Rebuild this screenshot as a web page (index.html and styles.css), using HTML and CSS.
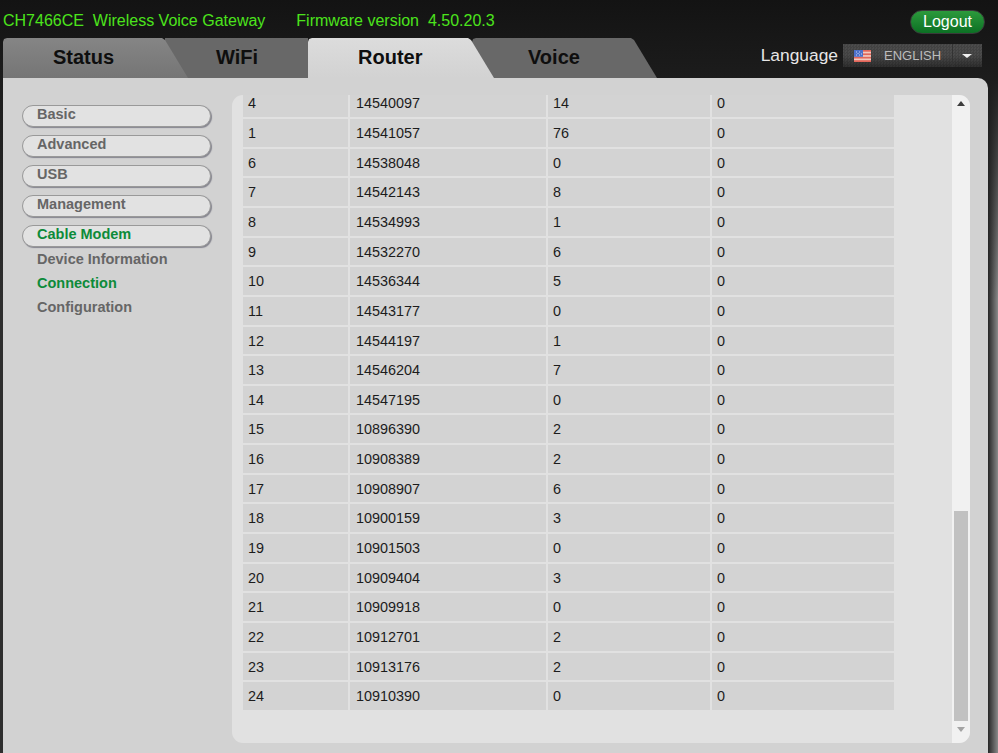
FILE: index.html
```html
<!DOCTYPE html>
<html lang="en">
<head>
<meta charset="utf-8">
<title>CH7466CE Wireless Voice Gateway</title>
<link rel="stylesheet" href="styles.css">
</head>
<body>
<div class="page">
  <header class="top">
    <div class="top-left">
      <div class="brand">
        <span>CH7466CE&nbsp; Wireless Voice Gateway</span>
        <span>Firmware version&nbsp; 4.50.20.3</span>
      </div>
      <nav class="tabs">
        <a class="tab tab-status">Status</a>
        <a class="tab tab-wifi">WiFi</a>
        <a class="tab tab-router">Router</a>
        <a class="tab tab-voice">Voice</a>
      </nav>
    </div>
    <div class="top-right">
      <button class="logout">Logout</button>
      <div class="lang">
        <span class="lang-label">Language</span>
        <div class="lang-select">
          <svg class="flag" width="17" height="12" viewBox="0 0 17 12">
            <rect width="17" height="12" fill="#f3c9bf"/>
            <rect y="0" width="17" height="1.7" fill="#e2665a"/>
            <rect y="3.4" width="17" height="1.7" fill="#e2665a"/>
            <rect y="6.8" width="17" height="1.7" fill="#e2665a"/>
            <rect y="10.2" width="17" height="1.8" fill="#e2665a"/>
            <rect width="9" height="6.8" fill="#4d70c9"/>
            <path d="M2 2h1M5 2h1M7 4h1M3.500 3.500h1M2 5h1M5 5h1" stroke="#c4d2f2" stroke-width="1"/>
          </svg>
          <span class="lang-name">ENGLISH</span>
          <span class="lang-caret"></span>
        </div>
      </div>
    </div>
  </header>

  <main class="panel">
    <aside class="side">
      <a class="pill">Basic</a>
      <a class="pill">Advanced</a>
      <a class="pill">USB</a>
      <a class="pill">Management</a>
      <a class="pill is-on">Cable Modem</a>
      <ul class="sub">
        <li>Device Information</li>
        <li class="is-on">Connection</li>
        <li>Configuration</li>
      </ul>
    </aside>

    <section class="box">
      <div class="viewport">
        <div class="grid">
          <div>4</div><div>14540097</div><div>14</div><div>0</div>
          <div>1</div><div>14541057</div><div>76</div><div>0</div>
          <div>6</div><div>14538048</div><div>0</div><div>0</div>
          <div>7</div><div>14542143</div><div>8</div><div>0</div>
          <div>8</div><div>14534993</div><div>1</div><div>0</div>
          <div>9</div><div>14532270</div><div>6</div><div>0</div>
          <div>10</div><div>14536344</div><div>5</div><div>0</div>
          <div>11</div><div>14543177</div><div>0</div><div>0</div>
          <div>12</div><div>14544197</div><div>1</div><div>0</div>
          <div>13</div><div>14546204</div><div>7</div><div>0</div>
          <div>14</div><div>14547195</div><div>0</div><div>0</div>
          <div>15</div><div>10896390</div><div>2</div><div>0</div>
          <div>16</div><div>10908389</div><div>2</div><div>0</div>
          <div>17</div><div>10908907</div><div>6</div><div>0</div>
          <div>18</div><div>10900159</div><div>3</div><div>0</div>
          <div>19</div><div>10901503</div><div>0</div><div>0</div>
          <div>20</div><div>10909404</div><div>3</div><div>0</div>
          <div>21</div><div>10909918</div><div>0</div><div>0</div>
          <div>22</div><div>10912701</div><div>2</div><div>0</div>
          <div>23</div><div>10913176</div><div>2</div><div>0</div>
          <div>24</div><div>10910390</div><div>0</div><div>0</div>
        </div>
      </div>
      <div class="scrollbar">
        <span class="arrow arrow-up"></span>
        <div class="track"><div class="thumb"></div></div>
        <span class="arrow arrow-down"></span>
      </div>
    </section>
  </main>
</div>
</body>
</html>
```

FILE: styles.css
```css
* { box-sizing: border-box; }
html, body { margin: 0; padding: 0; height: 100%; overflow: hidden; }
body {
  font-family: "Liberation Sans", Arial, sans-serif;
  background-color: #2e2e2e;
  background-image:
    linear-gradient(#1c1c1c 78px, rgba(28,28,28,0) 300px),
    linear-gradient(to right, #262626, #8a8a8a);
  background-repeat: no-repeat;
  background-size: 100% 100%, 10px 100%;
  background-position: 0 0, right 0 top 0;
}
.page { width: 998px; height: 753px; display: flex; flex-direction: column; }

.top {
  height: 78px;
  flex: none;
  display: flex;
  justify-content: space-between;
  background: linear-gradient(#131313, #1c1c1c);
}
.top-left { padding-left: 3px; display: flex; flex-direction: column; }
.brand {
  height: 38px;
  padding-top: 12px;
  display: flex;
  gap: 31px;
  font-size: 16px;
  line-height: 18px;
  color: #4ce41c;
}
.tabs { display: flex; height: 40px; }
.tab {
  display: block;
  height: 40px;
  padding: 8px 0 0 50px;
  font-size: 20px;
  line-height: 22px;
  font-weight: 700;
  color: #0e0e0e;
  clip-path: polygon(0 4px, 1px 1px, 4px 0, calc(100% - 26px) 0, calc(100% - 23px) 2px, 100% 100%, 0 100%);
}
.tab-status { width: 185px; background: linear-gradient(#858585, #757575); position: relative; z-index: 2; }
.tab-wifi { width: 143px; margin-left: -23px; padding-left: 51px; background: #686868; clip-path: none; }
.tab-router { width: 186px; background: linear-gradient(#dcdcdc, #d2d2d2); position: relative; z-index: 2; }
.tab-voice { width: 185px; margin-left: -22px; padding-left: 56px; background: #686868; }

.top-right {
  width: 155px;
  margin-right: 13px;
  padding-top: 10px;
  display: flex;
  flex-direction: column;
  align-items: flex-end;
  position: relative;
}
.logout {
  width: 75px;
  height: 24px;
  padding: 0;
  border: 1px solid #3a3a3a;
  border-radius: 12px;
  background: linear-gradient(#2c9a3c, #0c7024);
  color: #fff;
  font: 16px/20px "Liberation Sans", Arial, sans-serif;
}
.lang {
  position: absolute;
  right: 3px;
  top: 44px;
  display: flex;
  align-items: center;
  gap: 5px;
}
.lang-label { font-size: 17.4px; line-height: 20px; padding-bottom: 2px; color: #e6e6e6; }
.lang-select {
  width: 139px;
  height: 23px;
  display: flex;
  align-items: center;
  padding-left: 11px;
  background:
    repeating-conic-gradient(rgba(0,0,0,.12) 0 25%, transparent 0 50%) 0 0 / 3px 3px,
    linear-gradient(#4c4c4c, #4a4a4a 50%, #2e2e2e);
}
.flag { flex: none; }
.lang-name {
  width: 82px;
  height: 100%;
  padding-left: 13px;
  font-size: 13px;
  line-height: 23px;
  color: #bcbcbc;
  border-right: 1px solid #333;
}
.lang-caret {
  width: 0;
  height: 0;
  margin-left: 9px;
  border-left: 5px solid transparent;
  border-right: 5px solid transparent;
  border-top: 4px solid #f0f0f0;
}

.panel {
  flex: 1;
  width: 985px;
  margin-left: 3px;
  min-height: 0;
  display: flex;
  gap: 21px;
  padding: 17px 18px 10px 19px;
  background: #d2d2d2;
  border-top-right-radius: 10px;
}
.side { width: 189px; flex: none; padding-top: 10px; display: flex; flex-direction: column; }
.pill {
  display: block;
  flex: none;
  height: 22px;
  margin-bottom: 8px;
  padding-left: 14px;
  font-size: 14.5px;
  line-height: 16px;
  font-weight: 700;
  color: #666;
  background: #e2e2e2;
  border: 1px solid #999;
  border-radius: 11px;
  box-shadow: 1px 1px 1px #85858f;
}
.pill.is-on, .sub .is-on { color: #0d8b3a; }
.sub {
  list-style: none;
  margin: -8px 0 0;
  padding: 0 0 0 15px;
  font-size: 14.5px;
  line-height: 24px;
  font-weight: 700;
  color: #666;
}

.box {
  flex: 1;
  min-width: 0;
  display: flex;
  justify-content: space-between;
  background: #e1e1e1;
  border-radius: 11px;
  overflow: hidden;
}
.viewport { flex: none; width: 662px; padding-left: 11px; overflow: hidden; }
.grid {
  display: grid;
  grid-template-columns: 105px 196px 162px 182px;
  grid-auto-rows: 27.65px;
  gap: 2px;
  margin-top: -5.6px;
  font-size: 14.4px;
  color: #1c1c1c;
}
.grid > div { background: #d3d3d3; padding-left: 5px; line-height: 28.3px; }
.grid > div:nth-child(4n+2) { padding-left: 6px; }

.scrollbar {
  width: 18px;
  flex: none;
  padding: 0 2px;
  display: flex;
  flex-direction: column;
  background: #f1f1f1;
}
.track { flex: 1; display: flex; flex-direction: column; justify-content: flex-end; }
.thumb { height: 210px; background: #c1c1c1; }
.arrow { flex: none; height: 22px; width: 14px; position: relative; display: block; }
.arrow::after {
  content: "";
  position: absolute;
  left: 3px;
  width: 0;
  height: 0;
  border-left: 4px solid transparent;
  border-right: 4px solid transparent;
}
.arrow-up::after { top: 6px; border-bottom: 5px solid #3c3c3c; }
.arrow-down::after { top: 6px; border-top: 5px solid #a3a3a3; }
```
